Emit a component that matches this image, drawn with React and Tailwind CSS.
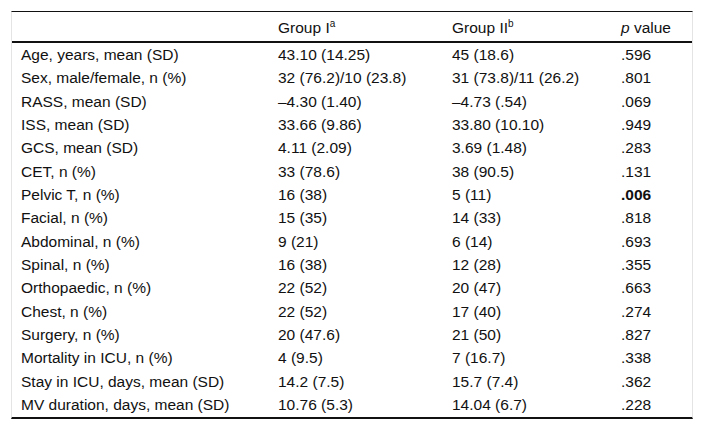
import React from "react";

const rows = [
  ["Age, years, mean (SD)", "43.10 (14.25)", "45 (18.6)", ".596"],
  ["Sex, male/female, n (%)", "32 (76.2)/10 (23.8)", "31 (73.8)/11 (26.2)", ".801"],
  ["RASS, mean (SD)", "\u20134.30 (1.40)", "\u20134.73 (.54)", ".069"],
  ["ISS, mean (SD)", "33.66 (9.86)", "33.80 (10.10)", ".949"],
  ["GCS, mean (SD)", "4.11 (2.09)", "3.69 (1.48)", ".283"],
  ["CET, n (%)", "33 (78.6)", "38 (90.5)", ".131"],
  ["Pelvic T, n (%)", "16 (38)", "5 (11)", ".006", true],
  ["Facial, n (%)", "15 (35)", "14 (33)", ".818"],
  ["Abdominal, n (%)", "9 (21)", "6 (14)", ".693"],
  ["Spinal, n (%)", "16 (38)", "12 (28)", ".355"],
  ["Orthopaedic, n (%)", "22 (52)", "20 (47)", ".663"],
  ["Chest, n (%)", "22 (52)", "17 (40)", ".274"],
  ["Surgery, n (%)", "20 (47.6)", "21 (50)", ".827"],
  ["Mortality in ICU, n (%)", "4 (9.5)", "7 (16.7)", ".338"],
  ["Stay in ICU, days, mean (SD)", "14.2 (7.5)", "15.7 (7.4)", ".362"],
  ["MV duration, days, mean (SD)", "10.76 (5.3)", "14.04 (6.7)", ".228"],
];

const grid = "grid grid-cols-[257px_174px_169px_70px] pl-[9px]";

export default function App() {
  return (
    <div
      className="w-[703px] h-[430px] bg-white pt-[11px] pl-[11px] text-[15.5px] text-[#111]"
      style={{ fontFamily: '"Liberation Sans", Arial, sans-serif' }}
    >
      <div className="w-[682px] border-t border-t-[#111] border-b-2 border-b-[#111] border-x border-x-[#e4e4e4]">
        <div className={`${grid} h-[31px] items-center leading-none border-b-2 border-b-[#111] pt-[2px]`}>
          <div></div>
          <div>
            Group I<span className="text-[10px] relative -top-[6px]">a</span>
          </div>
          <div>
            Group II<span className="text-[10px] relative -top-[6px]">b</span>
          </div>
          <div>
            <span className="italic">p</span> value
          </div>
        </div>
        {rows.map((r, i) => (
          <div key={i} className={`${grid} h-[23.35px] items-center leading-none`}>
            <div>{r[0]}</div>
            <div>{r[1]}</div>
            <div>{r[2]}</div>
            <div className={r[4] ? "font-bold" : ""}>{r[3]}</div>
          </div>
        ))}
      </div>
    </div>
  );
}
